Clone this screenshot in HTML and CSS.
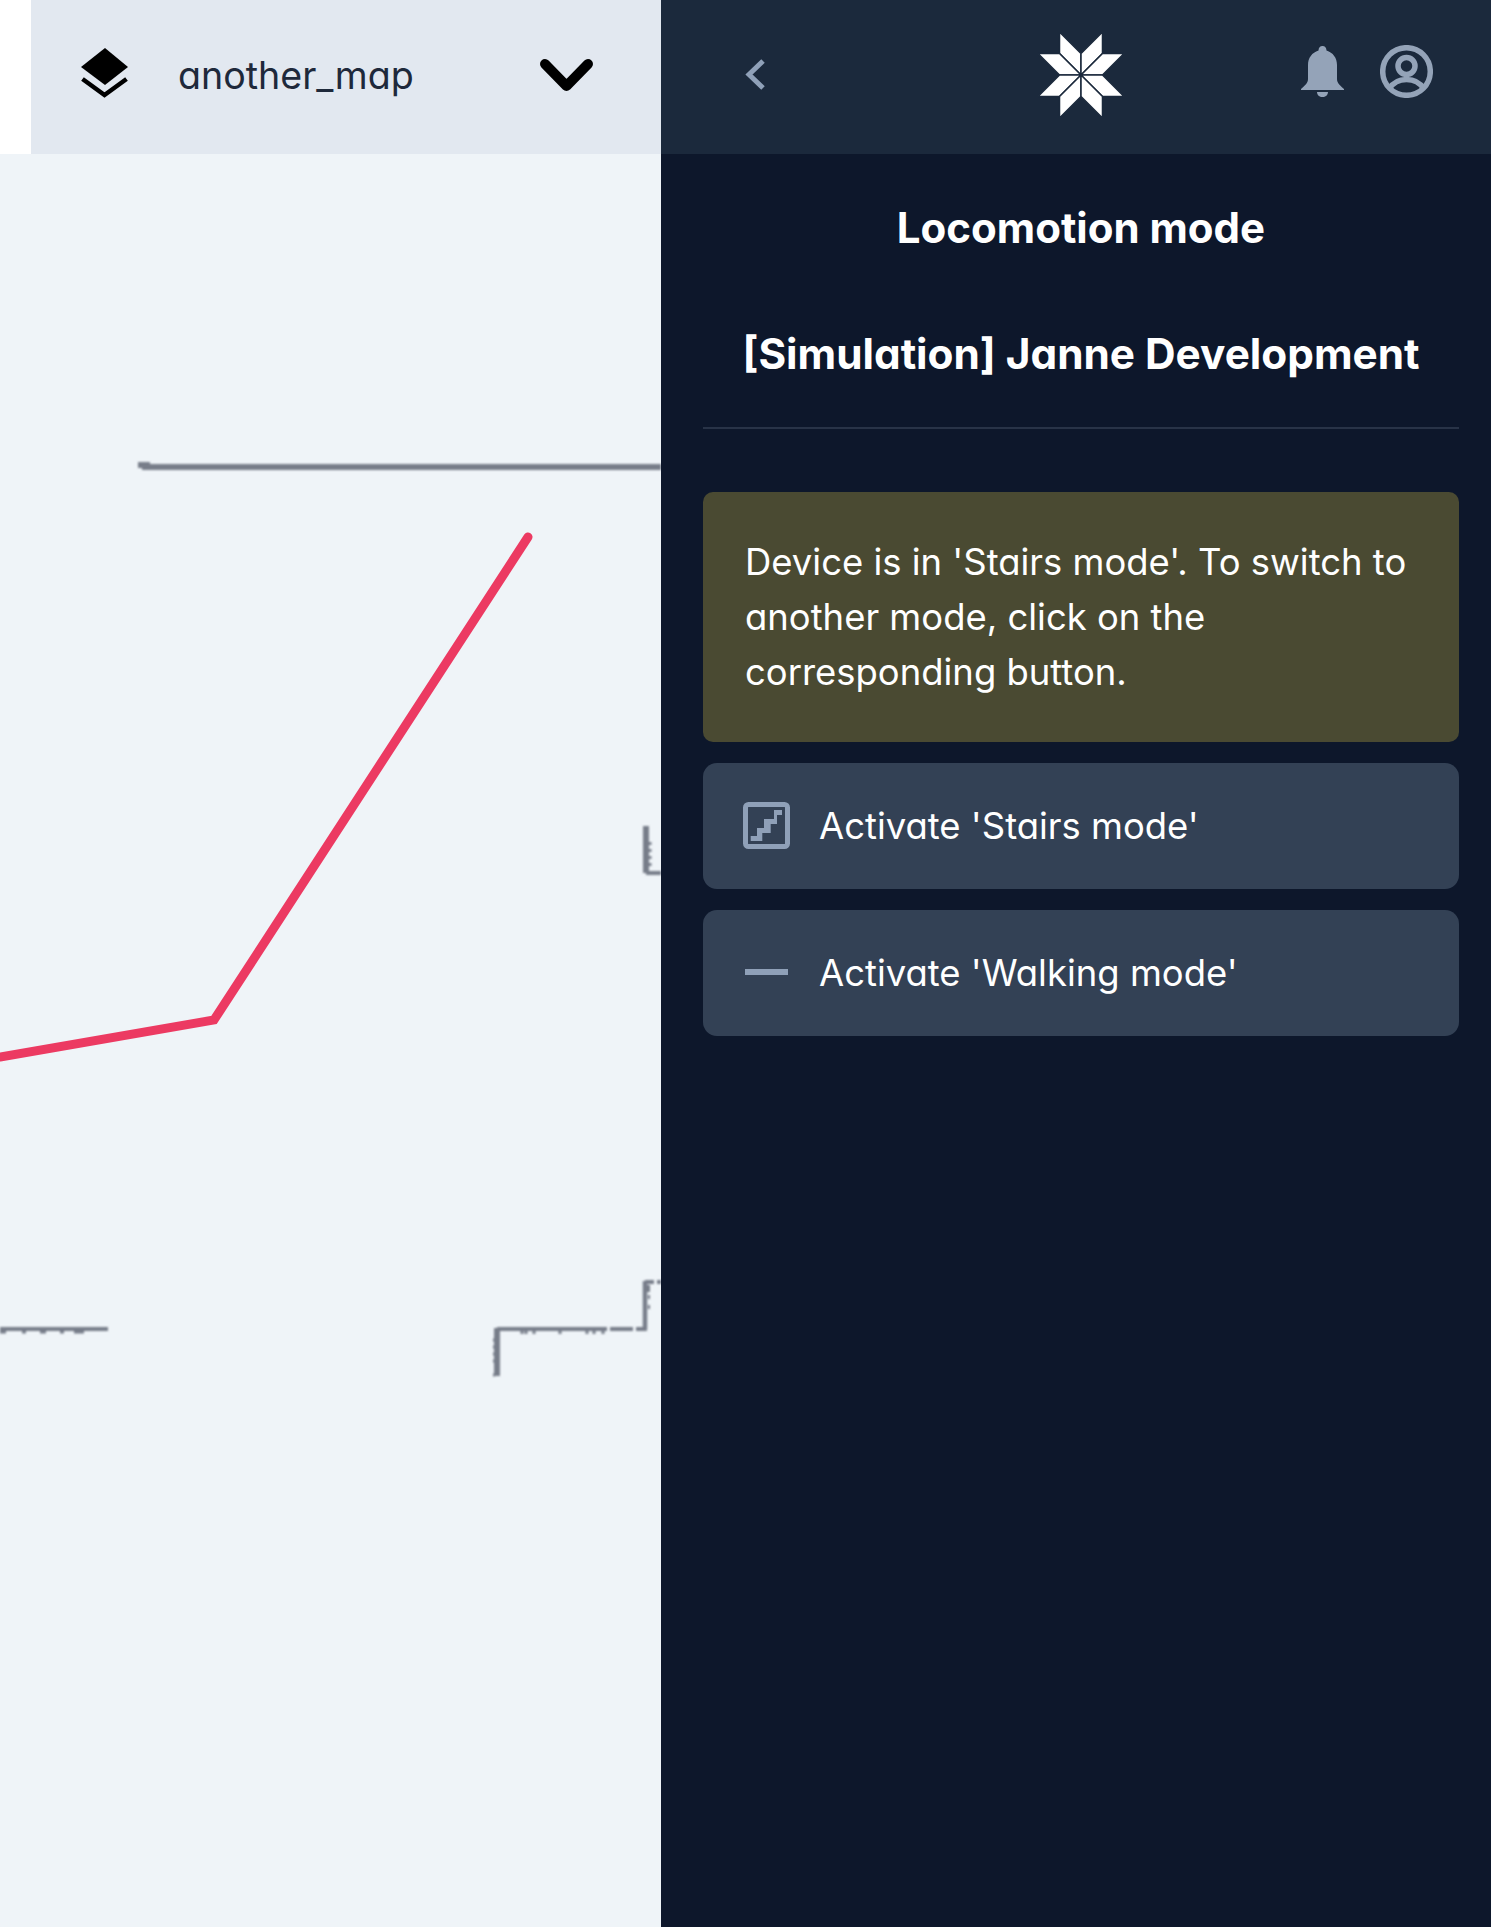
FILE: index.html
```html
<!DOCTYPE html>
<html lang="en">
<head>
<meta charset="utf-8">
<title>Locomotion mode</title>
<link rel="stylesheet" href="styles.css">
</head>
<body>
<div class="app">
  <main class="left">
    <div class="topbar">
      <div class="strip"></div>
      <div class="mapbar">
        <svg class="layers" viewBox="0 0 47 50" width="47" height="50"><path d="M24 0 47 19 24 37 0 19Z" fill="#000"/><path d="M1.5 31 23.5 47 45.5 31" fill="none" stroke="#000" stroke-width="4.5"/></svg>
        <span class="mapname">another_map</span>
        <svg class="caret" viewBox="0 0 53 32" width="53" height="32"><path d="M5 5 26.500 27 48 5" fill="none" stroke="#000" stroke-width="10" stroke-linecap="round" stroke-linejoin="round"/></svg>
      </div>
    </div>
    <svg class="map" viewBox="0 154 661 1773" width="661" height="1773">
      <defs><filter id="soft"><feGaussianBlur stdDeviation="0.9"/></filter></defs>
      <g class="walls" filter="url(#soft)">
        <path d="M138 465H150M142 467H661" stroke-width="6"/>
        <path d="M646 826V873" stroke-width="6"/>
        <path d="M650 842V845M650 849V852M650 856V859M650 863V866" stroke-width="3"/>
        <path d="M646 873H661" stroke-width="4"/>
        <path d="M0 1329H108" stroke-width="4"/>
        <path d="M0 1332H6M22 1332H26M40 1332H46M60 1332H64M74 1332H84" stroke-width="3"/>
        <path d="M497 1328V1376" stroke-width="6"/>
        <path d="M493 1340H495M493 1347H495M493 1354H495M493 1361H495M493 1375H495" stroke-width="3"/>
        <path d="M497 1329H607M610 1329H633M636 1329H647" stroke-width="4"/>
        <path d="M522 1331V1334M526 1331V1334M534 1331V1334M560 1331V1334M587 1331V1334M594 1331V1334M603 1331V1334" stroke-width="3"/>
        <path d="M645 1329V1281" stroke-width="4.500"/>
        <path d="M645 1282H654M657 1282H661" stroke-width="4"/>
        <path d="M648 1285V1292M648 1297H650M648 1307H650" stroke-width="4"/>
      </g>
      <path class="route" d="M0 1057 214 1020 528 537"/>
    </svg>
  </main>
  <aside class="panel">
    <header class="panelhead">
      <svg class="back" viewBox="0 0 20 31" width="20" height="31"><path d="M18 2 4 15.500 18 29" fill="none" stroke="#8fa0b8" stroke-width="5"/></svg>
      <svg class="logo" viewBox="-42 -42 84 84" width="86" height="86">
        <g fill="#fff" stroke="#1b293c" stroke-width="1.500">
          <path d="M0 0V-21L-21-42V-21Z"/><path d="M0 0V-21L21-42V-21Z"/>
          <path d="M0 0-21-21H-42L-21 0Z"/><path d="M0 0 21-21H42L21 0Z"/>
          <path d="M0 0-21 21H-42L-21 0Z"/><path d="M0 0 21 21H42L21 0Z"/>
          <path d="M0 0V21L-21 42V21Z"/><path d="M0 0V21L21 42V21Z"/>
        </g>
      </svg>
      <div class="headicons">
        <svg viewBox="0 0 43 51" width="43" height="51"><path fill="#94a3b8" d="M21.500 0C24 0 25.500 2 25.500 4.500 32 6.500 36 12 36 19V33C36 37 39 39.500 43 43V44H0V43C4 39.500 7 37 7 33V19C7 12 11 6.500 17.500 4.500 17.500 2 19 0 21.500 0ZM16 46H27C27 49 24.500 51 21.500 51S16 49 16 46Z"/></svg>
        <svg viewBox="0 0 53 53" width="53" height="53"><g fill="none" stroke="#94a3b8" stroke-width="5.500"><circle cx="26.500" cy="26.500" r="23.800"/><circle cx="26.500" cy="21" r="8.500"/><path d="M9 44C14 36 20 34.500 26.500 34.500S39 36 44 44"/></g></svg>
      </div>
    </header>
    <section class="content">
      <h1 class="title">Locomotion mode</h1>
      <h2 class="subtitle">[Simulation] Janne Development</h2>
      <hr class="rule">
      <p class="alert">Device is in 'Stairs mode'. To switch to another mode, click on the corresponding button.</p>
      <button class="action">
        <span class="ico"><svg viewBox="0 0 47 47" width="47" height="47"><rect x="2.500" y="2.500" width="42" height="42" rx="3" fill="none" stroke="#8fa0b8" stroke-width="5"/><path fill="#8fa0b8" d="M7.700 39V34H14V26H21V17H31V8H39V13H34V22H27.700V31H19.300V39Z"/></svg></span>
        <span>Activate 'Stairs mode'</span>
      </button>
      <button class="action">
        <span class="ico"><svg viewBox="0 0 47 47" width="47" height="47"><rect x="2" y="20" width="43" height="6" fill="#8fa0b8"/></svg></span>
        <span>Activate 'Walking mode'</span>
      </button>
    </section>
  </aside>
</div>
</body>
</html>
```
FILE: styles.css
```css
* { box-sizing: border-box; }
html, body { margin: 0; padding: 0; }
body { font-family: Inter, "Noto Sans", sans-serif; font-feature-settings: "cv11"; background: #eff4f8; }
.app { display: flex; width: 1491px; height: 1927px; overflow: hidden; }
.left { width: 661px; flex: none; display: flex; flex-direction: column; background: #eff4f8; }
.topbar { display: flex; height: 154px; flex: none; }
.strip { width: 31px; background: #fff; }
.mapbar { flex: 1; display: flex; align-items: center; background: #e2e8f0; padding-left: 50px; padding-right: 68px; }
.layers { flex: none; margin-top: -8px; }
.mapname { flex: 1; margin-left: 50px; font-size: 37.600px; color: #1e293b; padding-bottom: 4px; }
.caret { flex: none; margin-top: -4px; }
.map { display: block; flex: none; }
.walls path { fill: none; stroke: #777d89; }
.route { fill: none; stroke: #ec3a62; stroke-width: 9; stroke-linecap: round; stroke-linejoin: miter; }
.panel { flex: 1; display: flex; flex-direction: column; background: #0d172b; color: #fff; }
.panelhead { height: 154px; flex: none; background: #1b293c; display: flex; align-items: center; justify-content: space-between; padding: 0 58px 0 84px; position: relative; }
.back { flex: none; margin-top: -6px; }
.logo { position: absolute; left: 377px; top: 32px; }
.headicons { display: flex; gap: 36px; align-items: center; margin-top: -12px; }
.content { padding: 0 32px 0 42px; }
.title { margin: 46px 0 0; text-align: center; font-size: 42px; font-weight: 700; line-height: 56px; }
.subtitle { margin: 70px 0 0; text-align: center; font-size: 42.300px; font-weight: 700; line-height: 56px; white-space: nowrap; }
.rule { border: 0; height: 2px; background: #283347; margin: 45px 0 63px; }
.alert { margin: 0 0 21px; padding: 43px 42px 42px; background: #4a4a32; border-radius: 10px; font-size: 36.450px; line-height: 55px; height: 250px; }
.action { display: flex; align-items: center; width: 100%; height: 126px; margin-bottom: 21px; padding: 0 0 0 40px; border: 0; border-radius: 14px; background: #334155; color: #fff; font: inherit; font-size: 36.450px; text-align: left; }
.ico { flex: none; width: 47px; height: 47px; margin-right: 29px; margin-top: -2px; }
.ico svg { display: block; }
```
